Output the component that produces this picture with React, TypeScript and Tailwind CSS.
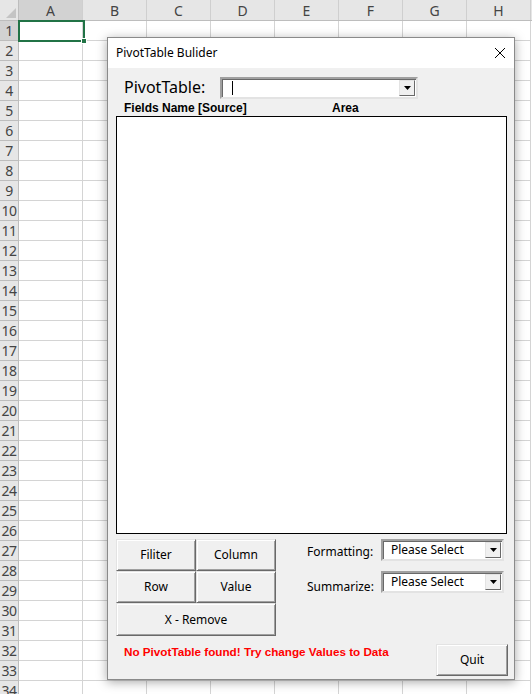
import React from 'react'

const cols = ['A', 'B', 'C', 'D', 'E', 'F', 'G', 'H']
const rows = Array.from({ length: 35 }, (_, i) => i + 1)

const ui = { fontFamily: '"Noto Sans", "Open Sans", sans-serif' }
const tahoma = { fontFamily: '"Liberation Sans", Arial, sans-serif' }

function Btn({ children, className = '' }: { children: React.ReactNode; className?: string }) {
  return (
    <div
      className={`flex items-center justify-center bg-[#f0f0f0] border border-t-[#e3e3e3] border-l-[#e3e3e3] border-b-[#696969] border-r-[#696969] shadow-[inset_1px_1px_0_#ffffff,inset_-1px_-1px_0_#a0a0a0] text-[12px] text-black ${className}`}
      style={ui}
    >
      {children}
    </div>
  )
}

function Combo({ text, className = '', cursor = false }: { text?: string; className?: string; cursor?: boolean }) {
  return (
    <div
      className={`flex shrink-0 bg-white border-2 border-t-[#a0a0a0] border-l-[#a0a0a0] border-b-[#e3e3e3] border-r-[#e3e3e3] shadow-[inset_1px_1px_0_#696969] ${className}`}
    >
      <div className="flex-1 flex items-center pl-[8px] text-[12px] text-black" style={ui}>
        {cursor && <div className="w-px h-[14px] bg-black ml-[2px]" />}
        {text}
      </div>
      <div className="w-[16px] my-px mr-px flex items-center justify-center bg-[#f0f0f0] border border-t-[#e3e3e3] border-l-[#e3e3e3] border-b-[#696969] border-r-[#696969]">
        <svg width="7" height="4" viewBox="0 0 7 4">
          <path d="M0 0h7L3.5 4z" fill="#000" />
        </svg>
      </div>
    </div>
  )
}

export default function App() {
  return (
    <div className="relative w-[532px] h-[694px] overflow-hidden bg-white" style={{ fontFamily: '"Liberation Sans", Arial, sans-serif' }}>
      {/* sheet header */}
      <div className="flex h-[21px] bg-[#e6e6e6] border-b border-[#bdbdbd]">
        <div className="relative w-[19px] shrink-0 border-r border-[#bdbdbd]">
          <svg className="absolute right-[2px] bottom-[2px]" width="10" height="10" viewBox="0 0 10 10">
            <path d="M10 0v10H0z" fill="#c4c4c4" />
          </svg>
        </div>
        {cols.map((c) => (
          <div
            key={c}
            className={`w-[64px] shrink-0 flex items-center justify-center border-r border-[#cfcfcf] text-[14px] text-[#444] ${c === 'A' ? 'bg-[#d2d2d2]' : ''}`}
            style={ui}
          >
            {c}
          </div>
        ))}
      </div>
      {rows.map((r) => (
        <div key={r} className="flex h-[20px]">
          <div
            className={`w-[19px] shrink-0 flex items-center justify-center border-r border-b border-[#bdbdbd] text-[14px] text-[#444] tracking-[-0.5px] ${r === 1 ? 'bg-[#d2d2d2]' : 'bg-[#e6e6e6]'}`}
            style={ui}
          >
            {r}
          </div>
          {cols.map((c) => (
            <div key={c} className="w-[64px] shrink-0 border-r border-b border-[#d4d4d4]" />
          ))}
        </div>
      ))}

      {/* selected A1 */}
      <div className="absolute left-[18px] top-[20px] w-[67px] h-[22px] border-2 border-[#217346]" />
      <div className="absolute left-[81px] top-[38px] w-[6px] h-[6px] bg-[#217346] border border-white" />

      {/* dialog */}
      <div className="absolute left-[107px] top-[37px] w-[408px] h-[643px] bg-[#f0f0f0] border border-[#8a8a8a] shadow-[0_2px_10px_rgba(0,0,0,0.35)] flex flex-col">
        <div className="h-[30px] bg-white flex items-center justify-between pl-[8px] pr-[8px]">
          <span className="text-[12px] text-black" style={ui}>PivotTable Bulider</span>
          <svg width="12" height="12" viewBox="0 0 12 12">
            <path d="M1 1l10 10M11 1L1 11" stroke="#000" strokeWidth="1" />
          </svg>
        </div>
        <div className="flex flex-col pl-[8px]">
          <div className="flex items-center mt-[9px] h-[22px]">
            <span className="ml-[8px] w-[96px] text-[16px] text-black -mt-[3px]" style={ui}>PivotTable:</span>
            <Combo className="w-[198px] h-[22px]" cursor />
          </div>
          <div className="flex items-center h-[17px] text-[12px] font-bold text-black" style={tahoma}>
            <span className="ml-[8px] w-[208px]">Fields Name [Source]</span>
            <span>Area</span>
          </div>
          <div className="w-[391px] h-[418px] bg-white border border-black" />
          <div className="flex mt-[5px]">
            <div className="w-[160px] shrink-0 flex flex-col">
              <div className="flex">
                <Btn className="w-[80px] h-[32px]">Filiter</Btn>
                <Btn className="w-[80px] h-[32px]">Column</Btn>
              </div>
              <div className="flex">
                <Btn className="w-[80px] h-[32px]">Row</Btn>
                <Btn className="w-[80px] h-[32px]">Value</Btn>
              </div>
              <Btn className="w-[160px] h-[33px]">X - Remove</Btn>
            </div>
            <div className="flex flex-col ml-[31px] gap-[10px]">
              <div className="flex items-center h-[22px]">
                <span className="w-[74px] shrink-0 text-[12px] text-black pt-[3px]" style={ui}>Formatting:</span>
                <Combo className="w-[123px] h-[22px]" text="Please Select" />
              </div>
              <div className="flex items-center h-[22px]">
                <span className="w-[74px] shrink-0 text-[12px] text-black pt-[10px]" style={ui}>Summarize:</span>
                <Combo className="w-[123px] h-[22px]" text="Please Select" />
              </div>
            </div>
          </div>
          <div className="flex items-start mt-[8px]">
            <span className="ml-[8px] w-[312px] text-[11.7px] font-bold text-[#ff0000] -mt-[1px]" style={tahoma}>
              No PivotTable found! Try change Values to Data
            </span>
            <Btn className="w-[72px] h-[32px]">Quit</Btn>
          </div>
        </div>
      </div>
    </div>
  )
}
